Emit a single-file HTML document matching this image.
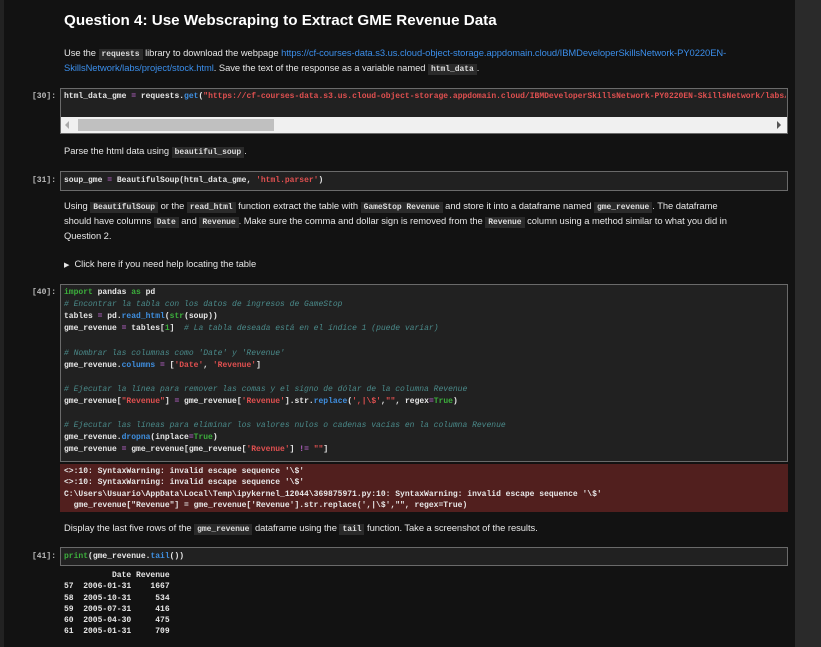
<!DOCTYPE html>
<html><head><meta charset="utf-8"><style>
*{margin:0;padding:0;box-sizing:border-box}
body{width:821px;height:647px;background:#121212;position:relative;overflow:hidden;font-family:"Liberation Sans",sans-serif;color:#e6e6e6}
.ls{position:absolute;left:0;top:0;width:4px;height:647px;background:#222}
.rs{position:absolute;left:795px;top:0;width:26px;height:647px;background:#2a2a2a}
.t{position:absolute;left:64px;font-size:9.4px;white-space:nowrap;letter-spacing:-0.05px}
.h{position:absolute;left:64px;top:12px;font-size:15.2px;font-weight:bold;color:#fff;white-space:nowrap}
code{font-family:"Liberation Mono",monospace;font-size:8px;background:#2a2a2a;padding:1px 3px;font-weight:bold;color:#ddd}
a{color:#3b8eea;text-decoration:none}
.box{position:absolute;left:60px;width:728px;background:#212121;border:1px solid #6a6a6a}
.p{position:absolute;width:56px;left:0;text-align:right;font-family:"Liberation Mono",monospace;font-size:8px;color:#bbb;font-weight:bold}
.l{position:absolute;left:64px;font-family:"Liberation Mono",monospace;font-size:8px;white-space:pre;color:#e8e8e8;font-weight:bold}
.cm{color:#4a8a8a;font-style:italic;font-weight:normal}
.k{color:#3cae3c}.s{color:#e05050}.f{color:#3f8fe0}.o{color:#b060c0}
.err{position:absolute;left:60px;top:464px;width:728px;height:48px;background:#511f1e}
.out{line-height:11.3px}
</style></head><body>
<div class="ls"></div><div class="rs"></div>
<div class="h">Question 4: Use Webscraping to Extract GME Revenue Data</div>
<div class="t" style="top:47px">Use the <code>requests</code> library to download the webpage <a>https://cf-courses-data.s3.us.cloud-object-storage.appdomain.cloud/IBMDeveloperSkillsNetwork-PY0220EN-</a></div>
<div class="t" style="top:62px"><a>SkillsNetwork/labs/project/stock.html</a>. Save the text of the response as a variable named <code>html_data</code>.</div>

<div class="p" style="top:92px">[30]:</div>
<div class="box" style="top:88px;height:46px"></div>
<div class="l" style="top:92px;width:722px;overflow:hidden">html_data_gme <span class="o">=</span> requests.<span class="f">get</span>(<span class="s">"https://cf-courses-data.s3.us.cloud-object-storage.appdomain.cloud/IBMDeveloperSkillsNetwork-PY0220EN-SkillsNetwork/labs/p</span></div>
<div style="position:absolute;left:61px;top:117px;width:726px;height:16px;background:#f0f0f0"></div>
<div style="position:absolute;left:78px;top:119px;width:196px;height:12px;background:#c0c0c0"></div>
<div style="position:absolute;left:65px;top:121px;width:0;height:0;border-top:4px solid transparent;border-bottom:4px solid transparent;border-right:4px solid #aaa"></div>
<div style="position:absolute;left:777px;top:121px;width:0;height:0;border-top:4px solid transparent;border-bottom:4px solid transparent;border-left:4px solid #555"></div>

<div class="t" style="top:145px">Parse the html data using <code>beautiful_soup</code>.</div>
<div class="p" style="top:176px">[31]:</div>
<div class="box" style="top:171px;height:20px"></div>
<div class="l" style="top:176px">soup_gme <span class="o">=</span> BeautifulSoup(html_data_gme, <span class="s">'html.parser'</span>)</div>

<div class="t" style="top:200px">Using <code>BeautifulSoup</code> or the <code>read_html</code> function extract the table with <code>GameStop Revenue</code> and store it into a dataframe named <code>gme_revenue</code>. The dataframe</div>
<div class="t" style="top:215px">should have columns <code>Date</code> and <code>Revenue</code>. Make sure the comma and dollar sign is removed from the <code>Revenue</code> column using a method similar to what you did in</div>
<div class="t" style="top:230px">Question 2.</div>
<div class="t" style="top:258px"><span style="font-size:7px">▶</span>&nbsp;&nbsp;Click here if you need help locating the table</div>

<div class="p" style="top:288px">[40]:</div>
<div class="box" style="top:284px;height:178px"></div>
<div class="l" style="top:288px"><span class="k">import</span> pandas <span class="k">as</span> pd</div>
<div class="l" style="top:300px"><span class="cm"># Encontrar la tabla con los datos de ingresos de GameStop</span></div>
<div class="l" style="top:312px">tables <span class="o">=</span> pd.<span class="f">read_html</span>(<span class="k">str</span>(soup))</div>
<div class="l" style="top:324px">gme_revenue <span class="o">=</span> tables[<span class="k">1</span>]  <span class="cm"># La tabla deseada está en el índice 1 (puede variar)</span></div>
<div class="l" style="top:349px"><span class="cm"># Nombrar las columnas como 'Date' y 'Revenue'</span></div>
<div class="l" style="top:361px">gme_revenue.<span class="f">columns</span> <span class="o">=</span> [<span class="s">'Date'</span>, <span class="s">'Revenue'</span>]</div>
<div class="l" style="top:385px"><span class="cm"># Ejecutar la línea para remover las comas y el signo de dólar de la columna Revenue</span></div>
<div class="l" style="top:397px">gme_revenue[<span class="s">"Revenue"</span>] <span class="o">=</span> gme_revenue[<span class="s">'Revenue'</span>].str.<span class="f">replace</span>(<span class="s">',|\$'</span>,<span class="s">""</span>, regex<span class="o">=</span><span class="k">True</span>)</div>
<div class="l" style="top:421px"><span class="cm"># Ejecutar las líneas para eliminar los valores nulos o cadenas vacías en la columna Revenue</span></div>
<div class="l" style="top:433px">gme_revenue.<span class="f">dropna</span>(inplace<span class="o">=</span><span class="k">True</span>)</div>
<div class="l" style="top:445px">gme_revenue <span class="o">=</span> gme_revenue[gme_revenue[<span class="s">'Revenue'</span>] <span class="o">!=</span> <span class="s">""</span>]</div>

<div class="err"></div>
<div class="l" style="top:467px">&lt;&gt;:10: SyntaxWarning: invalid escape sequence '\$'</div>
<div class="l" style="top:478px">&lt;&gt;:10: SyntaxWarning: invalid escape sequence '\$'</div>
<div class="l" style="top:490px">C:\Users\Usuario\AppData\Local\Temp\ipykernel_12044\369875971.py:10: SyntaxWarning: invalid escape sequence '\$'</div>
<div class="l" style="top:501px">  gme_revenue["Revenue"] = gme_revenue['Revenue'].str.replace(',|\$',"", regex=True)</div>

<div class="t" style="top:522px">Display the last five rows of the <code>gme_revenue</code> dataframe using the <code>tail</code> function. Take a screenshot of the results.</div>
<div class="p" style="top:552px">[41]:</div>
<div class="box" style="top:547px;height:19px"></div>
<div class="l" style="top:552px"><span class="k">print</span>(gme_revenue.<span class="f">tail</span>())</div>
<div class="l out" style="top:570px">          Date Revenue
57  2006-01-31    1667
58  2005-10-31     534
59  2005-07-31     416
60  2005-04-30     475
61  2005-01-31     709</div>
</body></html>
